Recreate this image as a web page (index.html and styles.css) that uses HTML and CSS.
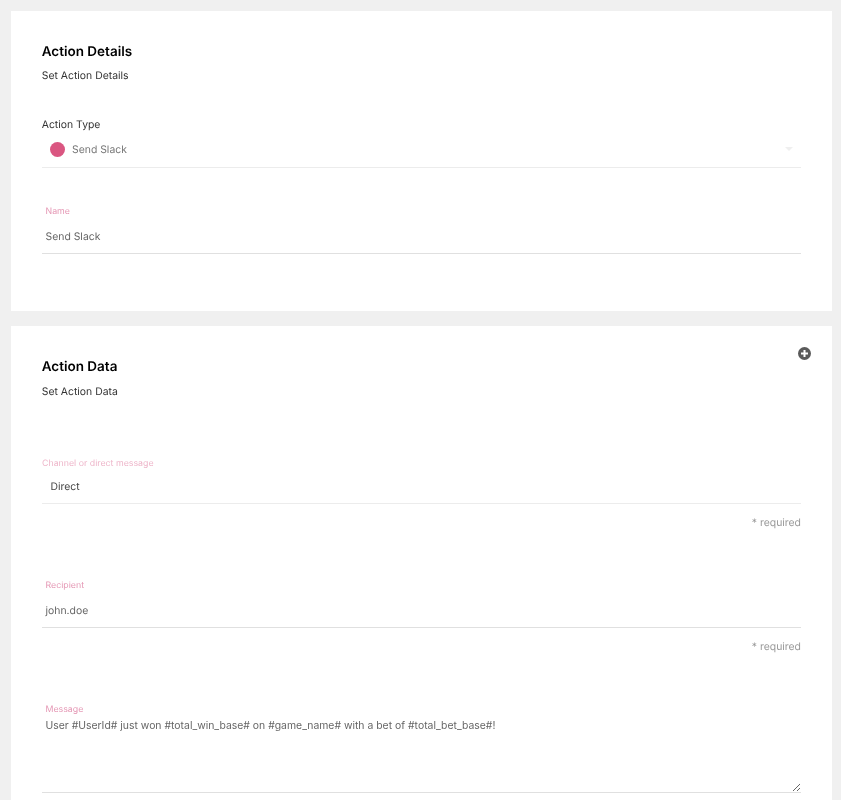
FILE: index.html
```html
<!DOCTYPE html>
<html lang="en">
<head>
<meta charset="utf-8">
<title>Action</title>
<link rel="stylesheet" href="styles.css">
</head>
<body>
<main class="page">
  <section class="card card-details">
    <h2 class="title">Action Details</h2>
    <p class="subtitle">Set Action Details</p>
    <div class="type-label">Action Type</div>
    <div class="select-row">
      <span class="dot"></span>
      <span class="select-text">Send Slack</span>
      <svg class="caret" width="8" height="4" viewBox="0 0 8 4"><path d="M0 0h8L4 4z" fill="#efefef"/></svg>
    </div>
    <div class="field field-name">
      <label class="label">Name</label>
      <div class="value">Send Slack</div>
    </div>
  </section>
  <section class="card card-data">
    <svg class="add" width="13" height="13" viewBox="0 0 13 13"><circle cx="6.5" cy="6.5" r="6.5" fill="#5a5a5a"/><path d="M6.5 3v7M3 6.5h7" stroke="#fff" stroke-width="2"/></svg>
    <h2 class="title">Action Data</h2>
    <p class="subtitle subtitle-data">Set Action Data</p>
    <div class="channel">
      <label class="label label-flush">Channel or direct message</label>
      <div class="value value-select">Direct</div>
      <div class="hint">* required</div>
    </div>
    <div class="field field-recipient">
      <label class="label">Recipient</label>
      <div class="value">john.doe</div>
      <div class="hint">* required</div>
    </div>
    <div class="field field-message">
      <label class="label">Message</label>
      <textarea class="message" readonly>User #UserId# just won #total_win_base# on #game_name# with a bet of #total_bet_base#!</textarea>
    </div>
  </section>
</main>
</body>
</html>
```
FILE: styles.css
```css
* { box-sizing: border-box; }
html, body { margin: 0; height: 800px; overflow: hidden; }
body {
  background: #f0f0f0;
  font-family: Inter, "Liberation Sans", sans-serif;
  font-size: 10.42px;
  color: #333;
  text-rendering: geometricPrecision;
}
.page { padding: 11px 9px 0 11px; display: flex; flex-direction: column; gap: 15px; will-change: transform; }
.card { background: #fff; padding: 0 31px 0 31px; position: relative; }
.card-details { height: 300px; padding-top: 32px; }
.card-data { padding-top: 32px; height: 500px; }
.title { margin: 0 0 0 -0.3px; padding-top: 1px; font-size: 13.5px; line-height: 17px; font-weight: 600; color: #000; }
.subtitle { margin: 8px 0 0 -0.3px; line-height: 13px; color: #333; }
.subtitle-data { margin-top: 9px; }
.type-label { margin: 36px 0 0 -0.3px; line-height: 13px; color: #333; }
.select-row {
  display: flex; align-items: center; height: 34px; padding: 0 8px 3px 8px;
  border-bottom: 1px solid #ececec; margin-top: 3px;
}
.dot { width: 15px; height: 15px; border-radius: 50%; background: #da5681; }
.select-text { margin-left: 7px; color: #777; flex: 1; }
.caret { display: block; }
.field-name { margin-top: 38px; }
.label { display: block; padding-left: 3.5px; font-size: 8.8px; line-height: 11px; color: #e598b5; }
.label-flush { padding-left: 0; color: #eeb6ca; }
.value {
  height: 34px; padding: 9px 3.5px 0; line-height: 15px; color: #666;
  border-bottom: 1px solid #e0e0e0; margin-top: 3px;
}
.channel { margin-top: 60px; }
.value-select { height: 33px; margin-top: 2px; padding: 8px 0 0 8.5px; color: #444; border-bottom-color: #ececec; }
.hint { margin-top: 12px; text-align: right; line-height: 13px; color: #999; }
.field-recipient { margin-top: 51px; }
.field-message { margin-top: 51px; }
.message {
  display: block; width: 100%; height: 78px; margin: 0; padding: 3px 3.5px 0;
  border: 0; border-bottom: 1px solid #e0e0e0; outline: 0;
  font: inherit; line-height: 15px; color: #666; background: #fff; resize: vertical;
}
.add { position: absolute; top: 21px; right: 21px; }
```
